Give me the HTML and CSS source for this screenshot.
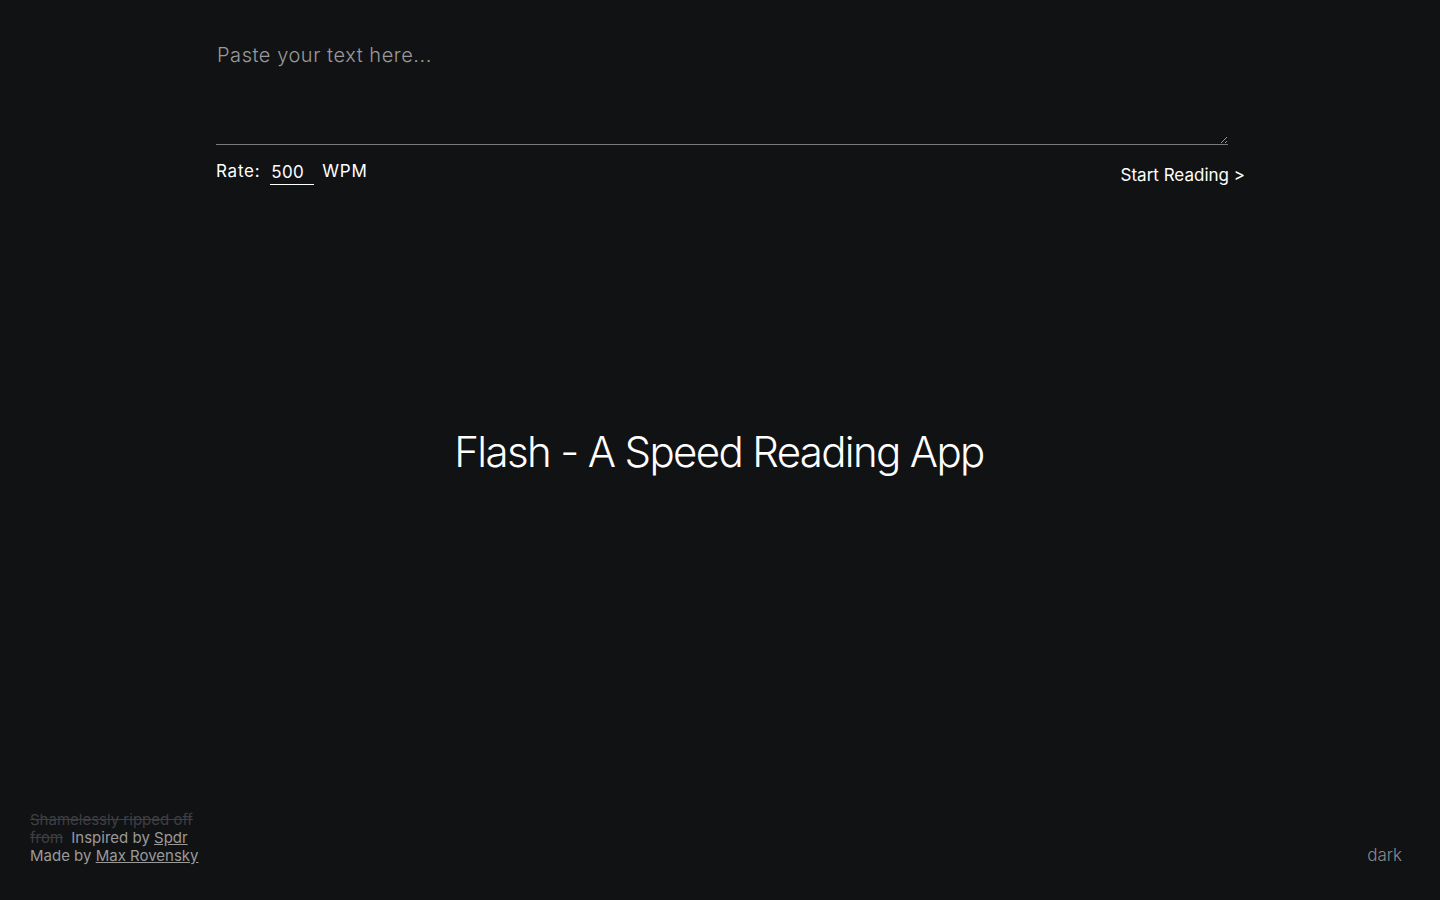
FILE: index.html
```html
<!DOCTYPE html>
<html>
<head>
<meta charset="utf-8">
<link rel="stylesheet" href="styles.css">
</head>
<body>
<div class="page">
  <div class="controls">
    <textarea class="text-input" placeholder="Paste your text here..."></textarea>
    <div class="row">
      <div class="rate">
        <span class="rate-label">Rate:</span>
        <input class="rate-input" type="text" value="500">
        <span class="wpm">WPM</span>
      </div>
      <button class="start">Start Reading &gt;</button>
    </div>
  </div>
  <div class="stage">
    <h1 class="title">Flash - A Speed Reading App</h1>
  </div>
  <div class="footer">
    <div class="credits">
      <div><s class="struck">Shamelessly ripped off from</s> Inspired by <a href="#">Spdr</a></div>
      <div>Made by <a href="#">Max Rovensky</a></div>
    </div>
    <div class="theme">dark</div>
  </div>
</div>
</body>
</html>
```
FILE: styles.css
```css
html, body {
  margin: 0;
  padding: 0;
  background: #111214;
  color: #fff;
  font-family: Inter, "Helvetica Neue", "Liberation Sans", sans-serif;
}
.page {
  height: 900px;
  display: flex;
  flex-direction: column;
}
.controls {
  width: 1029px;
  margin-left: 216px;
  padding-top: 40px;
}
.text-input {
  display: block;
  box-sizing: border-box;
  width: 1012px;
  height: 105px;
  background: transparent;
  border: none;
  border-bottom: 1px solid #7a7a7a;
  color: #ccc;
  font-family: inherit;
  font-size: 20px;
  font-weight: 300;
  letter-spacing: 0.55px;
  padding: 3px 1px;
  outline: none;
  resize: vertical;
}
.text-input::placeholder {
  color: #9a9a9a;
}
.row {
  display: flex;
  justify-content: space-between;
  align-items: flex-start;
  margin-top: 14px;
}
.rate {
  display: flex;
  align-items: flex-start;
  padding-top: 2px;
  font-size: 17px;
  letter-spacing: 0.75px;
}
.rate-input {
  width: 44px;
  box-sizing: border-box;
  margin: 0 8px 0 10px;
  background: transparent;
  border: none;
  border-bottom: 1px solid #fff;
  color: #fff;
  font-family: inherit;
  font-size: 17px;
  letter-spacing: 0.3px;
  padding: 1px 0 2px 1px;
  outline: none;
}
.start {
  background: transparent;
  border: none;
  color: #fff;
  font-family: inherit;
  font-size: 17px;
  padding: 0;
  margin-top: 6px;
  cursor: pointer;
}
.stage {
  flex: 1;
  display: flex;
  align-items: center;
  justify-content: center;
  padding-bottom: 94px;
}
.title {
  margin: 0 2px 0 0;
  font-size: 42px;
  font-weight: 300;
  letter-spacing: -1.65px;
}
.footer {
  display: flex;
  justify-content: space-between;
  align-items: flex-end;
  padding: 0 38px 35px 30px;
}
.credits {
  width: 170px;
  font-size: 15px;
  line-height: 18px;
  color: #9a9a9a;
}
.struck {
  color: #3e3f42;
  margin-right: 4px;
}
.credits a {
  color: #9a9a9a;
  text-decoration: underline;
}
.theme {
  font-size: 17px;
  color: #8a8a8a;
  font-weight: 300;
}
```
